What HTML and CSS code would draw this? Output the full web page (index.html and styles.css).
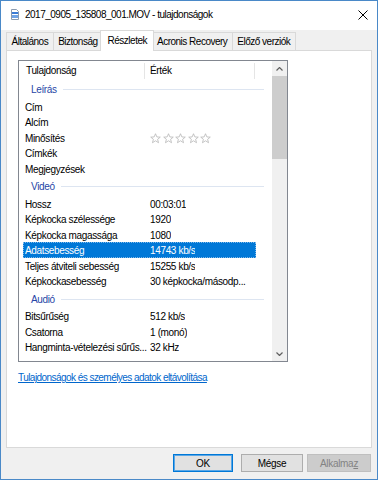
FILE: index.html
```html
<!DOCTYPE html>
<html lang="hu">
<head>
  <meta charset="UTF-8">
  <title>2017_0905_135808_001.MOV - tulajdonságok</title>
  <link rel="stylesheet" href="styles.css">
</head>
<body>
  <div class="window">
    <div class="titlebar">
      <svg class="file-icon" width="8" height="11" viewBox="0 0 8 11">
        <path d="M0.5 0.5 H5.5 L7.5 2.5 V10.5 H0.5 Z" fill="#fff" stroke="#8a9bb0"/>
        <rect x="1" y="3" width="6" height="2" fill="#3a7bd5"/>
        <rect x="1" y="6" width="6" height="3" fill="#6fa3e6"/>
      </svg>
      <span class="title">2017_0905_135808_001.MOV - tulajdonságok</span>
      <svg class="close" width="10" height="10" viewBox="0 0 10 10">
        <path d="M0.5 0.5 L9.5 9.5 M9.5 0.5 L0.5 9.5" stroke="#000" stroke-width="1"/>
      </svg>
    </div>

    <div class="content">
      <div class="tabs">
        <div class="tab">Általános</div>
        <div class="tab">Biztonság</div>
        <div class="tab active">Részletek</div>
        <div class="tab">Acronis Recovery</div>
        <div class="tab">Előző verziók</div>
      </div>

      <div class="panel">
        <div class="listbox">
          <div class="list">
            <div class="header">
              <div class="hcol first">Tulajdonság</div>
              <div class="hcol second">Érték</div>
            </div>
            <div class="rows">
              <div class="group">Leírás</div>
              <div class="row"><span class="k">Cím</span><span class="v"></span></div>
              <div class="row"><span class="k">Alcím</span><span class="v"></span></div>
              <div class="row">
                <span class="k">Minősítés</span>
                <span class="v stars">
                  <svg width="11" height="11" viewBox="0 0 12 12"><path class="star" d="M6 0.8 L7.5 4.3 L11.2 4.5 L8.3 6.9 L9.3 10.6 L6 8.5 L2.7 10.6 L3.7 6.9 L0.8 4.5 L4.5 4.3 Z"/></svg>
                  <svg width="11" height="11" viewBox="0 0 12 12"><path class="star" d="M6 0.8 L7.5 4.3 L11.2 4.5 L8.3 6.9 L9.3 10.6 L6 8.5 L2.7 10.6 L3.7 6.9 L0.8 4.5 L4.5 4.3 Z"/></svg>
                  <svg width="11" height="11" viewBox="0 0 12 12"><path class="star" d="M6 0.8 L7.5 4.3 L11.2 4.5 L8.3 6.9 L9.3 10.6 L6 8.5 L2.7 10.6 L3.7 6.9 L0.8 4.5 L4.5 4.3 Z"/></svg>
                  <svg width="11" height="11" viewBox="0 0 12 12"><path class="star" d="M6 0.8 L7.5 4.3 L11.2 4.5 L8.3 6.9 L9.3 10.6 L6 8.5 L2.7 10.6 L3.7 6.9 L0.8 4.5 L4.5 4.3 Z"/></svg>
                  <svg width="11" height="11" viewBox="0 0 12 12"><path class="star" d="M6 0.8 L7.5 4.3 L11.2 4.5 L8.3 6.9 L9.3 10.6 L6 8.5 L2.7 10.6 L3.7 6.9 L0.8 4.5 L4.5 4.3 Z"/></svg>
                </span>
              </div>
              <div class="row"><span class="k">Címkék</span><span class="v"></span></div>
              <div class="row"><span class="k">Megjegyzések</span><span class="v"></span></div>

              <div class="group">Videó</div>
              <div class="row"><span class="k">Hossz</span><span class="v">00:03:01</span></div>
              <div class="row"><span class="k">Képkocka szélessége</span><span class="v">1920</span></div>
              <div class="row"><span class="k">Képkocka magassága</span><span class="v">1080</span></div>
              <div class="row selected"><span class="k">Adatsebesség</span><span class="v">14743 kb/s</span></div>
              <div class="row"><span class="k">Teljes átviteli sebesség</span><span class="v">15255 kb/s</span></div>
              <div class="row"><span class="k">Képkockasebesség</span><span class="v">30 képkocka/másodp...</span></div>

              <div class="group">Audió</div>
              <div class="row"><span class="k">Bitsűrűség</span><span class="v">512 kb/s</span></div>
              <div class="row"><span class="k">Csatorna</span><span class="v">1 (monó)</span></div>
              <div class="row"><span class="k">Hangminta-vételezési sűrűs...</span><span class="v">32 kHz</span></div>

              <div class="group">Média</div>
            </div>
          </div>
          <div class="scrollbar">
            <div class="sb-btn">
              <svg width="7" height="4" viewBox="0 0 7 4"><path d="M0.5 3.5 L3.5 0.5 L6.5 3.5" fill="none" stroke="#606060" stroke-width="1.2"/></svg>
            </div>
            <div class="track"><div class="thumb"></div></div>
            <div class="sb-btn">
              <svg width="7" height="4" viewBox="0 0 7 4"><path d="M0.5 0.5 L3.5 3.5 L6.5 0.5" fill="none" stroke="#606060" stroke-width="1.2"/></svg>
            </div>
          </div>
        </div>
        <a class="link" href="#">Tulajdonságok és személyes adatok eltávolítása</a>
      </div>

      <div class="buttons">
        <button class="btn default">OK</button>
        <button class="btn cancel">Mégse</button>
        <button class="btn disabled">Alkalma<u>z</u></button>
      </div>
    </div>
  </div>
</body>
</html>
```

FILE: styles.css
```css
* { box-sizing: border-box; }
body {
  margin: 0;
  font-family: "Liberation Sans", Arial, sans-serif;
  font-size: 10px;
  color: #000;
  background: #fff;
}
.window {
  width: 378px;
  height: 480px;
  border: 1px solid #4a89c8;
  background: #f0f0f0;
  display: flex;
  flex-direction: column;
}
.titlebar {
  height: 29px;
  background: #fff;
  display: flex;
  align-items: center;
  padding: 0 9px 2px 10px;
}
.file-icon { margin-right: 6px; }
.title {
  flex: 1;
  letter-spacing: -0.5px;
}
.content {
  flex: 1;
  padding: 0 5px;
}
.tabs {
  display: flex;
  align-items: flex-end;
  height: 20px;
}
.tab {
  height: 18px;
  line-height: 17px;
  padding: 0 4.5px;
  margin-left: -1px;
  border: 1px solid #d9d9d9;
  border-bottom: none;
  background: #f0f0f0;
  letter-spacing: -0.5px;
  white-space: nowrap;
}
.tab:first-child { margin-left: 0; }
.tab.active {
  position: relative;
  z-index: 1;
  height: 21px;
  line-height: 19px;
  margin: 0 -2px -1px -3px;
  padding: 0 6.5px;
  background: #fff;
}
.panel {
  height: 398px;
  background: #fff;
  border: 1px solid #d9d9d9;
  padding: 9px 0 0 11px;
}
.listbox {
  width: 270px;
  height: 302px;
  border: 1px solid #828790;
  display: flex;
}
.list {
  flex: 1;
  display: flex;
  flex-direction: column;
  overflow: hidden;
  letter-spacing: -0.35px;
}
.header {
  height: 18px;
  flex-shrink: 0;
  display: flex;
  align-items: center;
  padding-top: 2px;
}
.hcol {
  height: 16px;
  line-height: 16px;
  border-right: 1px solid #e5e5e5;
}
.hcol.first { width: 126px; padding-left: 7px; }
.hcol.second { width: 110px; padding-left: 5px; }
.rows {
  flex: 1;
  overflow: hidden;
}
.group {
  height: 19.5px;
  display: flex;
  align-items: center;
  padding: 2px 8px 0 12px;
  color: #2645a6;
}
.group::after {
  content: "";
  flex: 1;
  height: 1px;
  margin-left: 6px;
  background: #dde5f1;
}
.row {
  height: 15.5px;
  display: flex;
  align-items: center;
  padding-top: 2px;
  white-space: nowrap;
}
.row .k {
  width: 126px;
  flex-shrink: 0;
  padding-left: 6px;
}
.row .v {
  padding-left: 5px;
  overflow: hidden;
}
.row.selected {
  margin: 0 16px 0 4px;
  background: #0078d7;
  color: #fff;
  outline: 1px dotted #7fb8e8;
  outline-offset: -1px;
}
.row.selected .k {
  width: 122px;
  padding-left: 2px;
}
.stars {
  display: flex;
  gap: 1.5px;
}
.star {
  fill: none;
  stroke: #b9b9b9;
  stroke-width: 0.9;
}
.scrollbar {
  width: 15px;
  background: #f0f0f0;
  display: flex;
  flex-direction: column;
}
.sb-btn {
  height: 15px;
  display: flex;
  align-items: center;
  justify-content: center;
}
.track { flex: 1; }
.thumb {
  height: 83px;
  background: #cdcdcd;
}
.link {
  display: inline-block;
  margin-top: 10px;
  color: #0066cc;
  text-decoration: underline;
  letter-spacing: -0.55px;
}
.buttons {
  display: flex;
  justify-content: flex-end;
  margin-top: 6px;
  padding-right: 1px;
}
.btn {
  height: 18px;
  padding: 0;
  font-family: inherit;
  font-size: 10px;
  letter-spacing: -0.3px;
  border: 1px solid #adadad;
  background: #e1e1e1;
  color: #000;
}
.btn.default {
  width: 60px;
  border-color: #0078d7;
  box-shadow: inset 0 0 0 1px #5aa7e6;
}
.btn.cancel {
  width: 62px;
  margin-left: 8px;
}
.btn.disabled {
  width: 64px;
  margin-left: 4px;
  background: #cccccc;
  border-color: #bfbfbf;
  color: #838383;
}
```
